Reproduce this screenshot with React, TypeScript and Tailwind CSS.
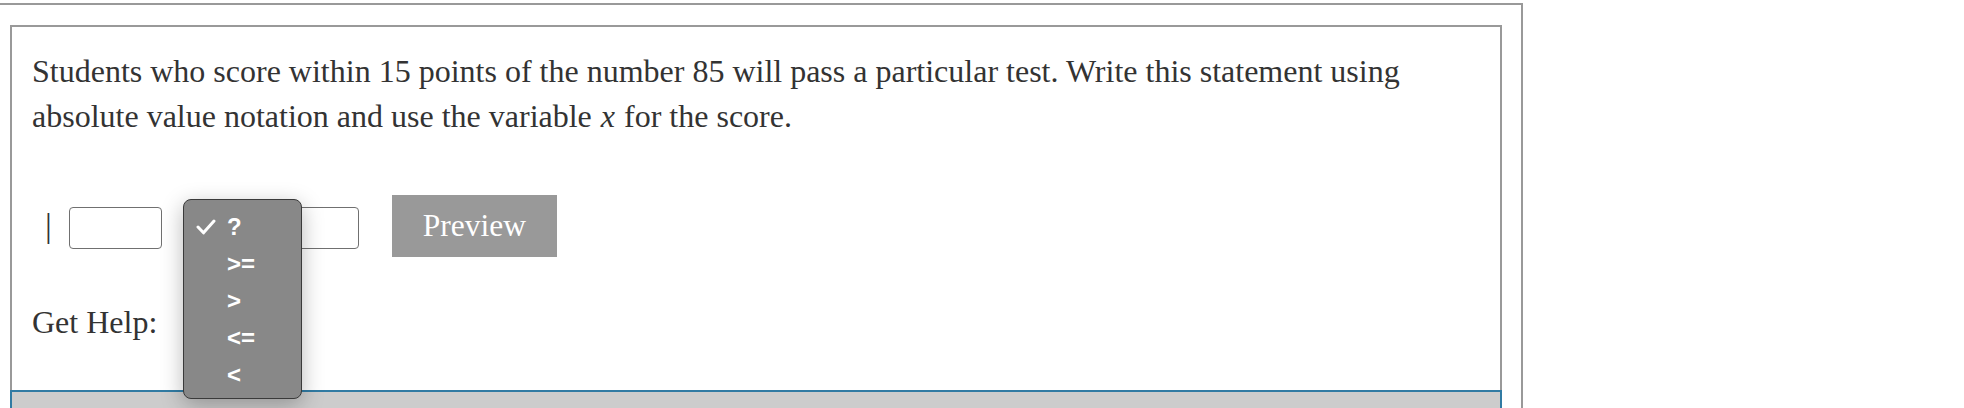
import React from "react";

const options = ["?", ">=", ">", "<=", "<"];

function OptionMenu() {
  return (
    <div className="absolute left-[171px] top-[172px] z-10 w-[119px] h-[200px] rounded-[8px] border border-[#3a3a3a] bg-[#888888] pt-[9px] shadow-[0_6px_22px_rgba(0,0,0,0.28)]">
      {options.map((o, i) => (
        <div key={o} className="flex h-[36.8px] items-center">
          <div className="w-[43px] pl-[12px]">
            {i === 0 && (
              <svg width="20" height="16" viewBox="0 0 20 16" fill="none">
                <path d="M2 8 L7.5 13.8 L18 2" stroke="white" strokeWidth="3" strokeLinecap="round" strokeLinejoin="round" />
              </svg>
            )}
          </div>
          <span className="font-['Liberation_Sans',Arial,sans-serif] text-[24px] font-bold leading-none text-white">{o}</span>
        </div>
      ))}
    </div>
  );
}

function Blank({ className = "" }: { className?: string }) {
  return <div className={`h-[42px] w-[93px] rounded-[4px] border-[1.5px] border-[#707070] bg-white ${className}`} />;
}

export default function App() {
  return (
    <div className="h-screen overflow-hidden bg-white font-['Liberation_Serif','Times_New_Roman',serif] text-[#333]">
      <div className="mt-[3px] w-[1523px] border-t-2 border-r-2 border-[#999] pt-[20px]">
        <div className="ml-[10px] w-[1492px]">
          {/* problem body */}
          <div className="relative border-2 border-b-0 border-[#999] px-[20px] pt-[22px] pb-[45px]">
            <p className="text-[32px] leading-[45px]">
              Students who score within 15 points of the number 85 will pass a particular test. Write this statement using absolute value notation and use the variable <i className="mx-[1px]">x</i> for the score.
            </p>

            <div className="mt-[56px] flex h-[62px] items-start">
              <span className="ml-[13px] mt-[14px] text-[34px] leading-none">|</span>
              <Blank className="ml-[17px] mt-[12px]" />
              <div className="w-[104px]" />
              <Blank className="mt-[12px]" />
              <button className="ml-[33px] h-[62px] w-[165px] bg-[#999] text-[31.5px] text-white">Preview</button>
            </div>

            <p className="mt-[43px] text-[32px] leading-[45px]">Get Help:</p>

            <OptionMenu />
          </div>
          {/* footer strip */}
          <div className="h-[20px] border-2 border-b-0 border-[#317ba3] bg-[#cccccc]" />
        </div>
      </div>
    </div>
  );
}
